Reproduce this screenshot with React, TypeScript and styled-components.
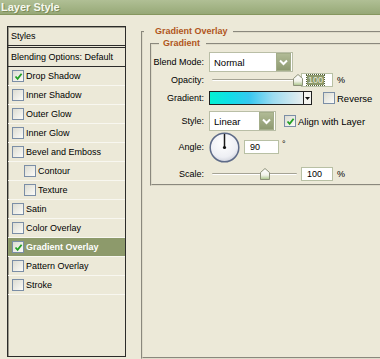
import styled, { createGlobalStyle } from 'styled-components';

const GlobalStyle = createGlobalStyle`
  html, body {
    margin: 0;
    padding: 0;
    overflow: hidden;
    background: #ece9d8;
  }
  body {
    font-family: 'Liberation Sans', Arial, sans-serif;
    font-size: 9px;
    color: #000;
  }
`;

const Window = styled.div`
  width: 380px;
  height: 359px;
  display: flex;
  flex-direction: column;
  background: #ece9d8;
  overflow: hidden;
`;

const TitleBar = styled.div`
  height: 14px;
  flex-shrink: 0;
  background: linear-gradient(#b0bf95, #a1b283 60%, #97a878);
  border-bottom: 1px solid #86975f;
  display: flex;
  align-items: center;
  padding-left: 1px;
`;

const Title = styled.span`
  font-size: 11px;
  font-weight: bold;
  color: #f6f8ee;
  text-shadow: 1px 1px 0 #7b8b58;
  line-height: 14px;
`;

const Body = styled.div`
  flex: 1;
  display: flex;
  gap: 15px;
  padding: 11px 0 0 7px;
`;

const StylesPanel = styled.div`
  width: 117px;
  height: 329px;
  flex-shrink: 0;
  border: 1px solid #2c2c2a;
  box-shadow: inset 1px 1px 0 #9c9a8c;
  display: flex;
  flex-direction: column;
`;

const HeaderRow = styled.div`
  height: 18px;
  display: flex;
  align-items: center;
  padding-left: 3px;
  border-bottom: 1px solid #2c2c2a;
  margin-bottom: 1px;
`;

const BlendRow = styled.div`
  height: 18px;
  display: flex;
  align-items: center;
  padding-left: 3px;
  border-top: 1px solid #2c2c2a;
  border-bottom: 1px solid #2c2c2a;
`;

const ListItem = styled.div<{ $selected?: boolean; $indent?: boolean }>`
  height: 18px;
  display: flex;
  align-items: center;
  gap: 2px;
  padding-left: ${(p) => (p.$indent ? 16 : 4)}px;
  border-bottom: 1px solid #f8f7f0;
  background: ${(p) => (p.$selected ? '#8d9a6b' : 'transparent')};
  color: ${(p) => (p.$selected ? '#ffffff' : '#000')};
  font-weight: ${(p) => (p.$selected ? 'bold' : 'normal')};
`;

const CheckBox = styled.span<{ $light?: boolean }>`
  width: 10px;
  height: 10px;
  flex-shrink: 0;
  border: 1px solid #7b8ea6;
  background: linear-gradient(135deg, #dcdcd2, #fbfbf8);
  display: inline-flex;
  align-items: center;
  justify-content: center;
`;

const Settings = styled.div`
  width: 300px;
  flex-shrink: 0;
  display: flex;
  flex-direction: column;
`;

const Group = styled.fieldset<{ $inner?: boolean }>`
  margin: ${(p) => (p.$inner ? '1px 0 0 7px' : '0')};
  padding: ${(p) => (p.$inner ? '3px 0 3px 0' : '0')};
  border: 2px groove #dedbc9;
  min-width: 0;
  height: ${(p) => (p.$inner ? 'auto' : '333px')};
  box-sizing: border-box;
`;

const Legend = styled.legend<{ $inner?: boolean }>`
  font-weight: bold;
  color: #b0551c;
  line-height: 11px;
  margin-left: ${(p) => (p.$inner ? 7 : 1)}px;
  padding: ${(p) => (p.$inner ? '0 6px 0 4px' : '0 5px 0 11px')};
`;

const Row = styled.div<{ $h: number; $mt?: number }>`
  height: ${(p) => p.$h}px;
  margin-top: ${(p) => p.$mt ?? 0}px;
  display: flex;
  align-items: center;
`;

const Label = styled.span`
  width: 52px;
  margin-right: 5px;
  text-align: right;
  flex-shrink: 0;
`;

const Select = styled.div<{ $w: number }>`
  width: ${(p) => p.$w}px;
  height: 20px;
  box-sizing: border-box;
  border: 1px solid #b9bea6;
  background: #fff;
  display: flex;
  align-items: center;
  justify-content: space-between;
  padding: 1px;
  padding-left: 4px;
  font-size: 9.5px;
`;

const DropButton = styled.span`
  width: 13px;
  height: 16px;
  background: linear-gradient(#b0ba95, #8e9a71);
  border: 1px solid #a3ad89;
  display: flex;
  align-items: center;
  justify-content: center;
`;

const Slider = styled.div`
  position: relative;
  width: 92px;
  height: 14px;
  flex-shrink: 0;
`;

const Track = styled.div`
  position: absolute;
  left: 3px;
  right: 4px;
  top: 6px;
  height: 1px;
  background: #a5a394;
  border-bottom: 1px solid #ffffff;
  border-radius: 1px;
`;

const Thumb = styled.svg`
  position: absolute;
  top: 1px;
`;

const NumberBox = styled.span<{ $w: number }>`
  width: ${(p) => p.$w}px;
  height: 14px;
  box-sizing: border-box;
  border: 1px solid #b8c0a4;
  background: #fff;
  display: inline-flex;
  align-items: center;
  padding-left: 5px;
  font-size: 9px;
  flex-shrink: 0;
`;

const Selected = styled.span`
  background: #8d996b;
  color: #e6ead7;
  outline: 1px dotted #55603c;
  padding: 0 1px;
  line-height: 10px;
`;

const Unit = styled.span<{ $ml: number; $up?: boolean }>`
  margin-left: ${(p) => p.$ml}px;
  margin-top: ${(p) => (p.$up ? -7 : 0)}px;
`;

const GradientBar = styled.div`
  width: 103px;
  height: 14px;
  box-sizing: border-box;
  border: 1px solid #202020;
  display: flex;
  flex-shrink: 0;
`;

const GradientFill = styled.div`
  flex: 1;
  background: linear-gradient(90deg, #04f1d2 0%, #12dde8 22%, #36c8f0 42%, #9ddcf1 68%, #e9eeee 100%);
`;

const GradientArrow = styled.div`
  width: 7px;
  border-left: 1px solid #202020;
  background: #f4f4f0;
  display: flex;
  align-items: center;
  justify-content: center;
`;

const Option = styled.span<{ $ml: number }>`
  display: flex;
  align-items: center;
  gap: 2px;
  margin-left: ${(p) => p.$ml}px;
  font-size: 9.5px;
`;

const Dial = styled.svg`
  flex-shrink: 0;
`;

function Check({ checked }: { checked?: boolean }) {
  return (
    <CheckBox>
      {checked && (
        <svg width="9" height="9" viewBox="0 0 9 9">
          <path d="M1.5 4.5 L3.6 6.8 L7.6 1.8" fill="none" stroke="#23a024" strokeWidth="1.8" />
        </svg>
      )}
    </CheckBox>
  );
}

function Chevron() {
  return (
    <svg width="9" height="7" viewBox="0 0 9 7">
      <path d="M1 1.5 L4.5 5 L8 1.5" fill="none" stroke="#ffffff" strokeWidth="2" />
    </svg>
  );
}

function SliderControl({ pos }: { pos: number }) {
  return (
    <Slider>
      <Track />
      <Thumb width="10" height="12" viewBox="0 0 10 12" style={{ left: pos - 5 }}>
        <defs>
          <linearGradient id={`th${pos}`} x1="0" y1="0" x2="0" y2="1">
            <stop offset="0" stopColor="#ffffff" />
            <stop offset="0.6" stopColor="#f2f2ea" />
            <stop offset="1" stopColor="#a9c487" />
          </linearGradient>
        </defs>
        <path d="M5 0.5 L9.5 4.5 L9.5 11.5 L0.5 11.5 L0.5 4.5 Z" fill={`url(#th${pos})`} stroke="#8c9179" />
      </Thumb>
    </Slider>
  );
}

const items: { label: string; checked?: boolean; indent?: boolean; selected?: boolean }[] = [
  { label: 'Drop Shadow', checked: true },
  { label: 'Inner Shadow' },
  { label: 'Outer Glow' },
  { label: 'Inner Glow' },
  { label: 'Bevel and Emboss' },
  { label: 'Contour', indent: true },
  { label: 'Texture', indent: true },
  { label: 'Satin' },
  { label: 'Color Overlay' },
  { label: 'Gradient Overlay', checked: true, selected: true },
  { label: 'Pattern Overlay' },
  { label: 'Stroke' },
];

export default function App() {
  return (
    <>
      <GlobalStyle />
      <Window>
        <TitleBar>
          <Title>Layer Style</Title>
        </TitleBar>
        <Body>
          <StylesPanel>
            <HeaderRow>Styles</HeaderRow>
            <BlendRow>Blending Options: Default</BlendRow>
            {items.map((it) => (
              <ListItem key={it.label} $selected={it.selected} $indent={it.indent}>
                <Check checked={it.checked} />
                {it.label}
              </ListItem>
            ))}
          </StylesPanel>

          <Settings>
            <Group>
              <Legend>Gradient Overlay</Legend>
              <Group $inner>
                <Legend $inner>Gradient</Legend>
                <Row $h={20}>
                  <Label>Blend Mode:</Label>
                  <Select $w={84}>
                    Normal
                    <DropButton>
                      <Chevron />
                    </DropButton>
                  </Select>
                </Row>
                <Row $h={14} $mt={1}>
                  <Label>Opacity:</Label>
                  <SliderControl pos={89} />
                  <NumberBox $w={32}>
                    <Selected>100</Selected>
                  </NumberBox>
                  <Unit $ml={4}>%</Unit>
                </Row>
                <Row $h={14} $mt={4}>
                  <Label>Gradient:</Label>
                  <GradientBar>
                    <GradientFill />
                    <GradientArrow>
                      <svg width="5" height="3" viewBox="0 0 5 3">
                        <path d="M0 0 L5 0 L2.5 3 Z" fill="#111" />
                      </svg>
                    </GradientArrow>
                  </GradientBar>
                  <Option $ml={11}>
                    <Check />
                    Reverse
                  </Option>
                </Row>
                <Row $h={20} $mt={6}>
                  <Label>Style:</Label>
                  <Select $w={67}>
                    Linear
                    <DropButton>
                      <Chevron />
                    </DropButton>
                  </Select>
                  <Option $ml={8}>
                    <Check checked />
                    Align with Layer
                  </Option>
                </Row>
                <Row $h={30} $mt={1}>
                  <Label>Angle:</Label>
                  <Dial width="31" height="31" viewBox="0 0 31 31">
                    <defs>
                      <radialGradient id="dialFill" cx="0.45" cy="0.35" r="0.7">
                        <stop offset="0" stopColor="#ffffff" />
                        <stop offset="0.7" stopColor="#eeeff4" />
                        <stop offset="1" stopColor="#c9ccd8" />
                      </radialGradient>
                    </defs>
                    <circle cx="15.5" cy="15.5" r="14.3" fill="url(#dialFill)" stroke="#5e6b88" strokeWidth="1.5" />
                    <line x1="15.5" y1="15.5" x2="15.5" y2="2" stroke="#1a1a1a" strokeWidth="1.5" />
                    <circle cx="15.5" cy="15.5" r="1.6" fill="#111" />
                  </Dial>
                  <NumberBox $w={35} style={{ marginLeft: 4 }}>90</NumberBox>
                  <Unit $ml={3} $up>°</Unit>
                </Row>
                <Row $h={14} $mt={5}>
                  <Label>Scale:</Label>
                  <SliderControl pos={56} />
                  <NumberBox $w={32}>100</NumberBox>
                  <Unit $ml={4}>%</Unit>
                </Row>
              </Group>
            </Group>
          </Settings>
        </Body>
      </Window>
    </>
  );
}
